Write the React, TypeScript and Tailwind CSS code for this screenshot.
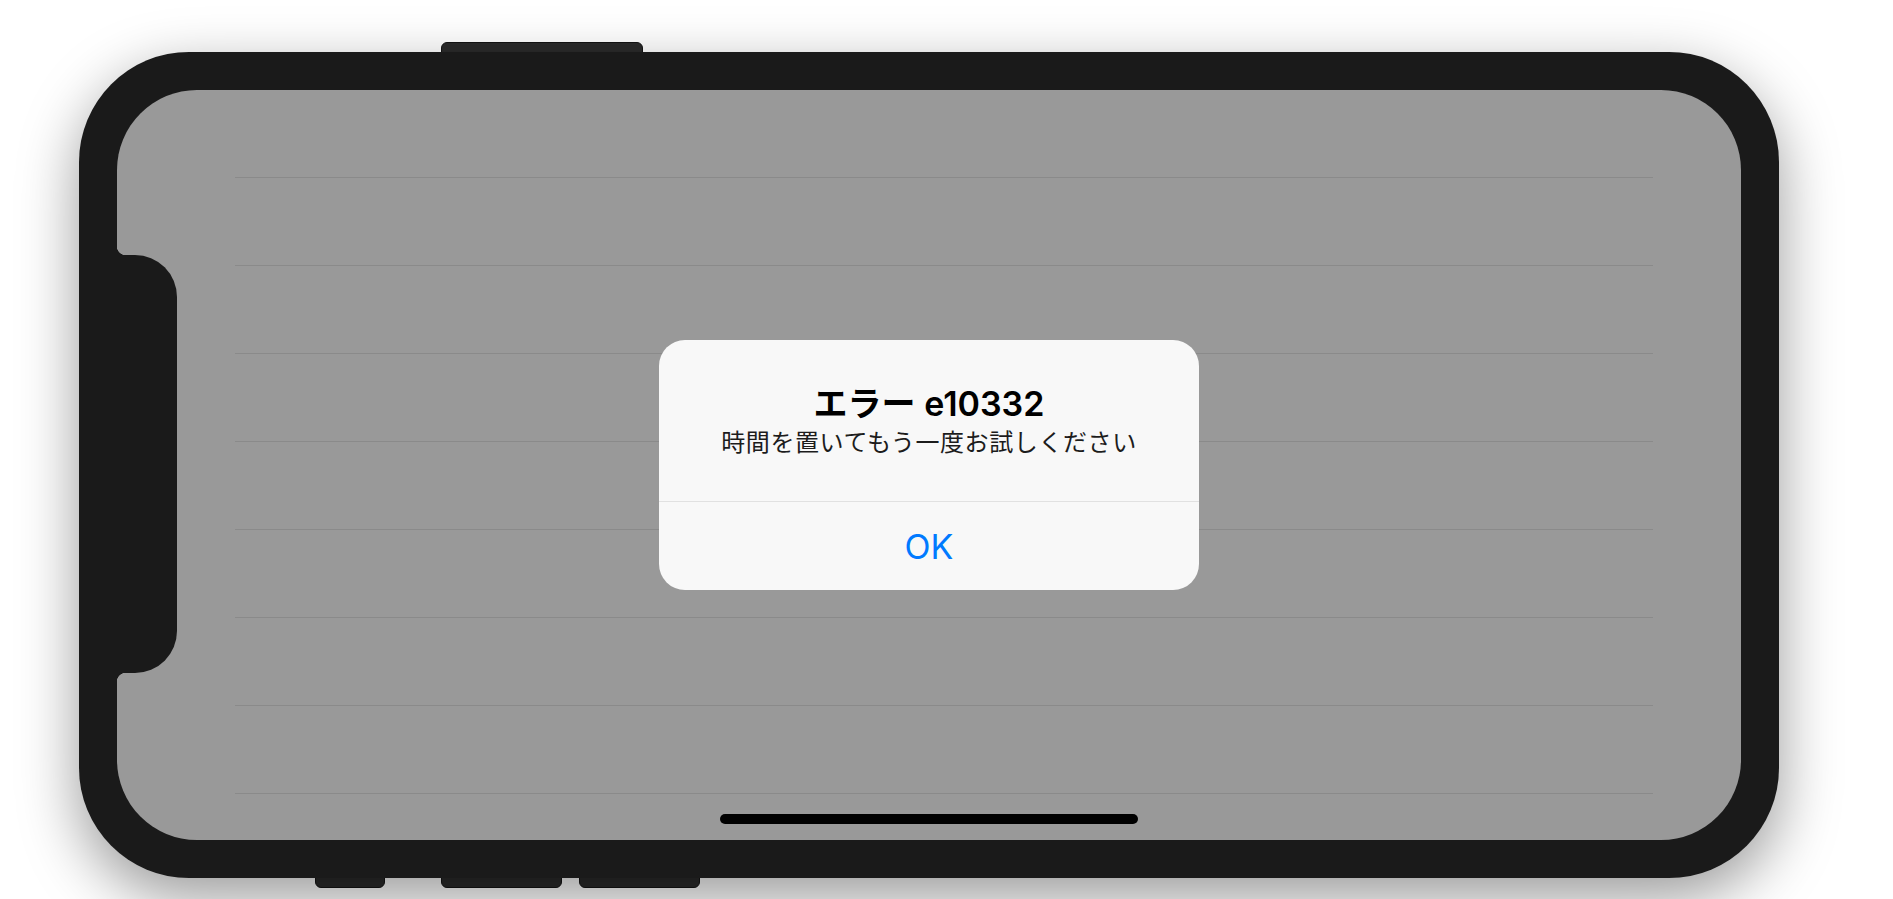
const rows = Array.from({ length: 8 }, (_, i) => i);

const btn = "h-[16px] rounded-[6px] border border-[#141414] bg-[#2b2b2b]";

function SideButtons() {
  return (
    <>
      {/* top button, tucked behind the frame */}
      <div className={`absolute left-[362px] top-[-10px] w-[202px] ${btn}`} />
      {/* bottom buttons */}
      <div className="absolute left-[236px] top-[820px] flex">
        <div className={`w-[70px] ${btn}`} />
        <div className={`ml-[56px] w-[121px] ${btn}`} />
        <div className={`ml-[17px] w-[121px] ${btn}`} />
      </div>
    </>
  );
}

function Notch() {
  return (
    <div className="absolute left-0 top-[156px] flex flex-col">
      <div className="h-[9px] w-[9px] bg-[radial-gradient(circle_at_100%_0,transparent_9px,#1a1a1a_9.5px)]" />
      <div className="h-[418px] w-[60px] rounded-r-[42px] bg-[#1a1a1a]" />
      <div className="h-[9px] w-[9px] bg-[radial-gradient(circle_at_100%_100%,transparent_9px,#1a1a1a_9.5px)]" />
    </div>
  );
}

function Alert() {
  return (
    <div className="w-[540px] overflow-hidden rounded-[26px] bg-[#f8f8f8] font-['Inter','Noto_Sans_CJK_JP',sans-serif]">
      <div className="flex h-[161px] flex-col items-center pt-[44px]">
        <div className="text-[34px] leading-[40px] font-semibold text-black">エラー e10332</div>
        <div className="mt-[4px] text-[24px] leading-[30px] tracking-[0.6px] text-[#1c1c1c]">
          時間を置いてもう一度お試しください
        </div>
      </div>
      <div className="flex h-[89px] items-center justify-center border-t border-[#e1e1e1] text-[34px] text-[#007aff]">
        OK
      </div>
    </div>
  );
}

export default function App() {
  return (
    <div className="h-[899px] w-full overflow-hidden bg-white pl-[79px] pt-[52px]">
      <div className="relative h-[826px] w-[1700px]">
        <SideButtons />
        <div className="relative z-10 h-full w-full rounded-[110px] bg-[#1a1a1a] p-[38px] shadow-[0_20px_60px_rgba(0,0,0,0.4)]">
          <div className="relative h-full w-full overflow-hidden rounded-[80px] bg-[#999999]">
            <div className="pl-[118px] pr-[88px]">
              {rows.map((r) => (
                <div key={r} className="h-[88px] border-b border-[#8a8a8a]" />
              ))}
            </div>
            <Notch />
            <div className="absolute inset-0 flex items-center justify-center">
              <Alert />
            </div>
            <div className="absolute bottom-[16px] left-1/2 h-[10px] w-[418px] -translate-x-1/2 rounded-full bg-black" />
          </div>
        </div>
      </div>
    </div>
  );
}
